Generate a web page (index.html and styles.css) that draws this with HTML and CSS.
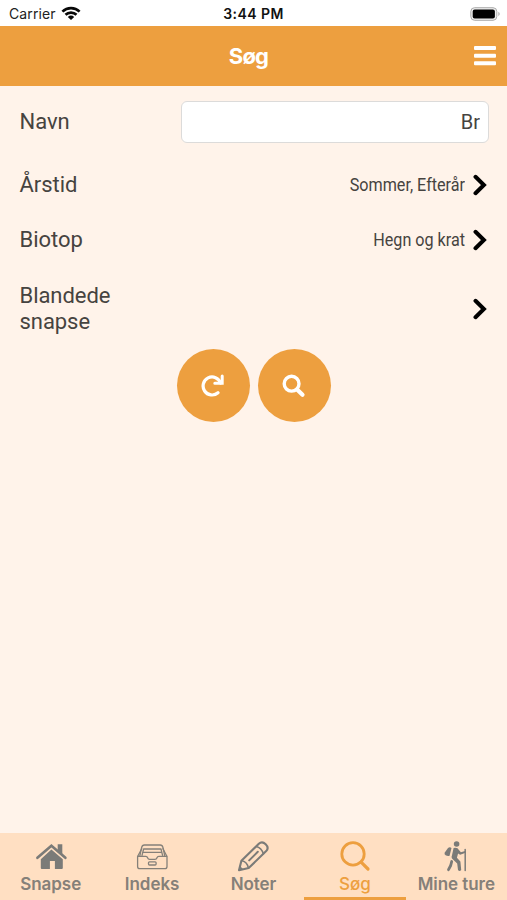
FILE: index.html
```html
<!DOCTYPE html>
<html lang="da">
<head>
<meta charset="utf-8">
<title>Søg</title>
<link rel="stylesheet" href="styles.css">
</head>
<body>
<div class="app">
  <div class="status">
    <div class="carrier"><span class="carrier-name">Carrier</span>
      <svg width="20" height="15" viewBox="0 0 20 15" fill="none" stroke="#080808" stroke-width="2.7"><path d="M1.4 5.6a12.4 12.4 0 0 1 17.2 0M4.5 8.8a7.9 7.9 0 0 1 11 0"/><path d="M10 14 6.8 10.9a4.7 4.7 0 0 1 6.4 0z" fill="#080808" stroke="none"/></svg>
    </div>
    <div class="clock">3:44 PM</div>
    <svg class="battery" width="31" height="14" viewBox="0 0 31 14"><rect x=".8" y=".7" width="26" height="12.6" rx="3.8" fill="#eee" stroke="#aaa"/><rect x="2.7" y="2.5" width="22.2" height="9" rx="2" fill="#000"/><path d="M28.4 4.8q2.6 2.2 0 4.4z" fill="#aaa"/></svg>
  </div>
  <header class="header">
    <h1 class="title">Søg</h1>
    <svg class="menu" width="22" height="20" viewBox="0 0 22 20" fill="#fff"><rect y="0" width="22" height="4" rx="1"/><rect y="7.7" width="22" height="4" rx="1"/><rect y="15.2" width="22" height="4" rx="1"/></svg>
  </header>
  <main class="form">
    <div class="row row-name"><label class="label" for="name">Navn</label><input class="input" id="name" value="Br"></div>
    <div class="row"><span class="label">Årstid</span><span class="value">Sommer, Efterår</span>
      <svg class="chevron" width="14" height="22" viewBox="0 0 14 22"><path d="M2.5 2.8 10.9 11 2.5 19.2"/></svg></div>
    <div class="row"><span class="label">Biotop</span><span class="value">Hegn og krat</span>
      <svg class="chevron" width="14" height="22" viewBox="0 0 14 22"><path d="M2.5 2.8 10.9 11 2.5 19.2"/></svg></div>
    <div class="row row-mixed"><span class="label">Blandede snapse</span><span class="value"></span>
      <svg class="chevron" width="14" height="22" viewBox="0 0 14 22"><path d="M2.5 2.8 10.9 11 2.5 19.2"/></svg></div>
    <div class="actions">
      <button class="round" aria-label="Nulstil"><svg width="24" height="24" viewBox="0 0 24 24" fill="none" stroke="#fff" stroke-width="3.2"><path d="M19.6 9A9 9 0 1 0 17 18.8" stroke-linecap="round"/><path d="M21.2 2v7.2h-7.4" stroke-width="3" stroke-linecap="round"/></svg></button>
      <button class="round" aria-label="Søg"><svg width="24" height="24" viewBox="0 0 24 24" fill="none" stroke="#fff"><circle cx="9.6" cy="9.7" r="7.4" stroke-width="3.4"/><path d="m15.1 15.5 5.4 5.3" stroke-width="4.2" stroke-linecap="round"/></svg></button>
    </div>
  </main>
  <nav class="tabs">
    <a class="tab"><svg width="34" height="34" viewBox="0 0 34 34"><path d="M23.7 3.2h4.6v10l-4.6-4z" fill="#7b7b78"/><path d="M3.4 16.8 17.4 4.7l14 12.1" fill="none" stroke="#7b7b78" stroke-width="2.6" stroke-linecap="round"/><path d="m17.4 8.4 11.4 9.8v8.9q0 1-1 1h-6.9v-8.2h-5v8.2H7.8q-1 0-1-1v-8.9z" fill="#7b7b78"/></svg><span>Snapse</span></a>
    <a class="tab"><svg width="34" height="34" viewBox="0 0 34 34" fill="none" stroke="#858079" stroke-width="1.3" stroke-linejoin="round"><path d="M2.6 15.5 7 7.2M32 15.5 27.7 7.2"/><path d="M2.6 15.4h8.2q1.4 0 1.8 1.3.5 1.7 2.1 1.7h5.2q1.6 0 2.1-1.7.4-1.3 1.8-1.3H32v10q0 2.2-2.2 2.2H4.8q-2.2 0-2.2-2.2z"/><path d="m4.8 15.2 1.8-8.6Q7.2 4 9.4 4h15.8q2.2 0 2.8 2.6l1.8 8.6M6.9 14.8 8.6 8H26l1.7 6.8M7.9 11.4h18.8"/><rect x="13.5" y="20.8" width="7.6" height="3.2" rx="1"/></svg><span>Indeks</span></a>
    <a class="tab"><svg width="34" height="34" viewBox="0 0 34 34" fill="none" stroke="#7b7b78" stroke-width="2.1" stroke-linejoin="round" stroke-linecap="round"><path d="M3 29.3 5.4 19.8 22.8 2.8q3.3-3.1 6.9.4t.5 6.9L12.7 27z"/><path d="M20.2 5.6q5.2 1.3 7.2 7.2M6.1 19.8q4.9 1.1 6.2 6.8" stroke-width="1.5"/><path d="m13.2 19.4 8.6-8.6" stroke-width="2"/><path d="m3 29.3.9-4.4 3.4 3.3z" fill="#7b7b78" stroke="none"/></svg><span>Noter</span></a>
    <a class="tab active"><svg width="34" height="34" viewBox="0 0 34 34" fill="none" stroke="#ed9f3f"><circle cx="15" cy="12.9" r="11.2" stroke-width="2.8"/><path d="m23.1 21.1 6.9 6.9" stroke-width="3.2" stroke-linecap="round"/></svg><span>Søg</span></a>
    <a class="tab"><svg width="34" height="34" viewBox="0 0 34 34" fill="none" stroke="#7b7b78" stroke-linecap="round" stroke-linejoin="round"><circle cx="17.6" cy="3" r="2.8" fill="#7b7b78" stroke="none"/><path d="M14.6 7q4-.8 5.3 1.9l2 2.4 4.3-1.3q1.3.4.5 1.8l-5.6 2-2-1.4-1.2 4.3 3.5 3.8.8 8.4q-1.7 2.3-3.2 0l-.8-6.5-5.2-4.8q-1-1 .1-3.8z" fill="#7b7b78" stroke="none"/><path d="m12.7 20.5-1 4-2.2 4.2" stroke-width="2.8"/><path d="M9 7.1q1.6-1.5 3.5-.1l-1.9 7.8q-1.7.8-4-.5-1.4-1-1-2.5z" fill="#7b7b78" stroke="none"/><path d="M26.2 8.4v21.2" stroke-width="1.5"/></svg><span>Mine ture</span></a>
  </nav>
</div>
</body>
</html>
```
FILE: styles.css
```css
* { box-sizing: border-box; }
body { margin: 0; font-family: Roboto, sans-serif; color: #464340; background: #fff3ea; }
svg { display: block; flex: none; }
.app { width: 507px; height: 900px; display: flex; flex-direction: column; overflow: hidden; }
.status { height: 26px; flex: none; background: #fff; display: grid; grid-template-columns: 1fr auto 1fr; align-items: center; padding: 1px 6px 0 9px; font: 14px Inter, sans-serif; color: #222; }
.carrier { display: flex; align-items: center; gap: 5px; }
.carrier-name { letter-spacing: .1px; }
.clock { font-weight: 600; color: #111; letter-spacing: .45px; margin-left: -3px; }
.battery { justify-self: end; }
.header { height: 60px; flex: none; background: #ed9f3f; display: grid; grid-template-columns: 1fr auto 1fr; align-items: center; padding: 0 11px 0 0; }
.title { grid-column: 2; margin: 0 0 0 1px; font: 700 22px/26px Inter, sans-serif; letter-spacing: -.8px; color: #fff; }
.menu { justify-self: end; }
.form { flex: 1; padding: 8px 18.5px 0 19.5px; }
.row { height: 55.5px; display: flex; align-items: center; }
.row-name { height: 56px; margin-bottom: 7px; }
.label { width: 161px; flex: none; font-size: 22px; line-height: 26px; letter-spacing: -.05px; }
.input { flex: 1; min-width: 0; height: 42px; border: 1.5px solid #dcdbda; border-radius: 6px; background: #fff; padding: 0 7.5px; font: 20px Roboto, sans-serif; color: #464340; text-align: right; outline: 0; }
.value { flex: 1; text-align: right; font-size: 18px; line-height: 22px; white-space: nowrap; transform: scaleX(.897); transform-origin: right; margin-right: 8px; }
.chevron { fill: none; stroke: #000; stroke-width: 4; stroke-linecap: round; stroke-linejoin: miter; margin-right: 2px; }
.row-mixed { height: 81px; }
.row-mixed .label { width: 115px; }
.actions { display: flex; justify-content: center; gap: 8px; margin-right: 1px; }
.round { width: 73px; height: 73px; border: 0; border-radius: 50%; padding: 0; background: #ed9f3f; display: grid; place-items: center; }
.tabs { height: 67px; flex: none; display: grid; grid-template-columns: repeat(5, 1fr); background: #ffdfc2; }
.tab { display: flex; flex-direction: column; align-items: center; padding-top: 8px; border-bottom: 3px solid transparent; font: 600 17px/18px Inter, sans-serif; letter-spacing: -.05px; color: #858079; white-space: nowrap; }
.tab.active { color: #ed9f3f; border-color: #ed9f3f; font-weight: 500; }
```
